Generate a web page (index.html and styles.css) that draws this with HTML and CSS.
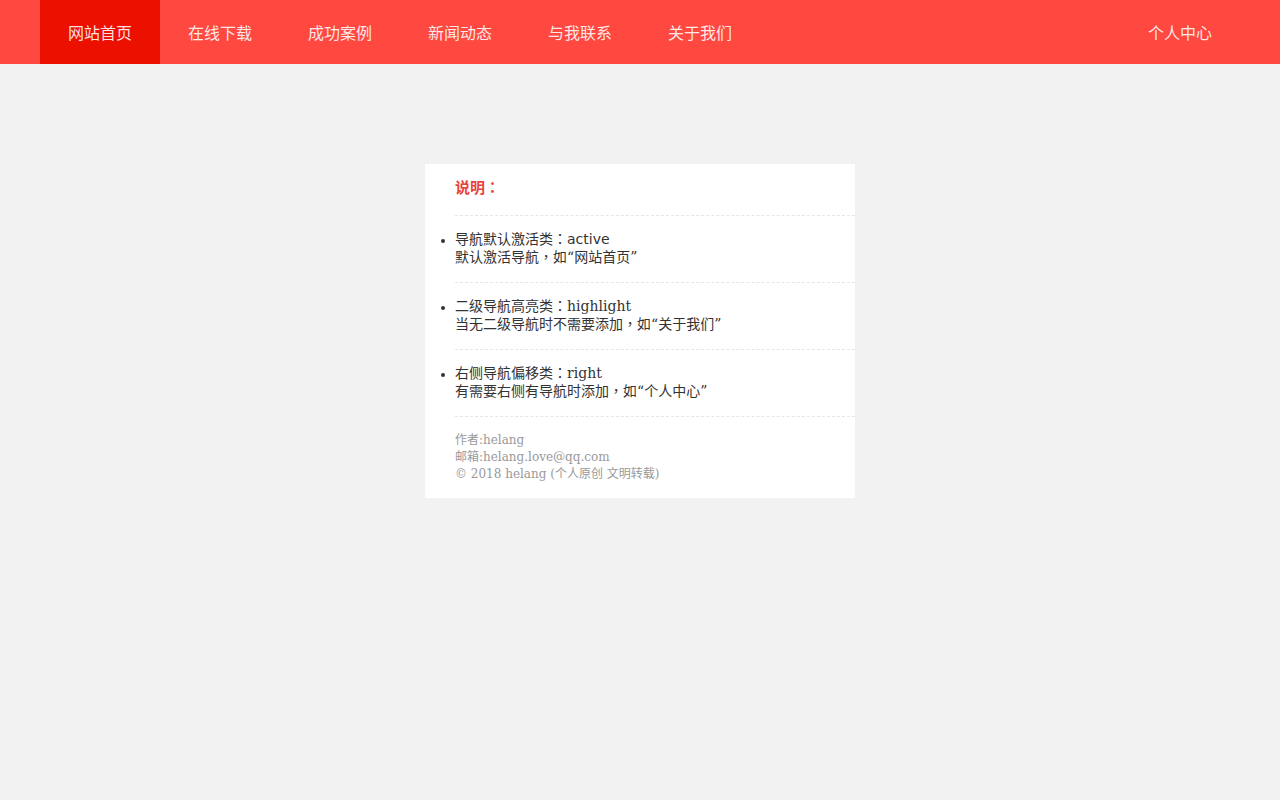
FILE: index.html
```html
<!DOCTYPE html>
<html lang="zh-CN">
<head>
<meta charset="utf-8">
<title>导航</title>
<link rel="stylesheet" href="styles.css">
</head>
<body>
<nav class="nav">
  <ul class="nav-list">
    <li class="nav-item active"><a href="#">网站首页</a></li>
    <li class="nav-item"><a href="#">在线下载</a></li>
    <li class="nav-item"><a href="#">成功案例</a></li>
    <li class="nav-item"><a href="#">新闻动态</a></li>
    <li class="nav-item"><a href="#">与我联系</a></li>
    <li class="nav-item"><a href="#">关于我们</a></li>
    <li class="nav-item right"><a href="#">个人中心</a></li>
  </ul>
</nav>
<div class="card" lang="zh-TW">
  <h3 class="card-title">说明：</h3>
  <ul class="notes">
    <li><span>导航默认激活类：<span class="sans">active</span></span><br>默认激活导航，如“网站首页”</li>
    <li><span>二级导航高亮类：highlight</span><br>当无二级导航时不需要添加，如“关于我们”</li>
    <li><span>右侧导航偏移类：right</span><br>有需要右侧有导航时添加，如“个人中心”</li>
  </ul>
  <div class="footer">
    作者:helang<br>
    邮箱:helang.love@qq.com<br>
    © 2018 helang (个人原创 文明转载)
  </div>
</div>
</body>
</html>
```
FILE: styles.css
```css
* { box-sizing: border-box; }
html, body { margin: 0; padding: 0; }
body {
  background: #f2f2f2;
  font-family: "DejaVu Serif", "Noto Sans CJK TC", serif;
  color: #333;
}
.nav {
  background: #ff4940;
  height: 64px;
  padding: 0 40px;
}
.nav-list {
  list-style: none;
  margin: 0;
  padding: 0;
  display: flex;
  height: 64px;
}
.nav-item a {
  display: block;
  width: 120px;
  height: 64px;
  line-height: 64px;
  text-align: center;
  font-family: "Noto Sans CJK SC", sans-serif;
  font-size: 16px;
  color: rgba(255,255,255,0.88);
  text-decoration: none;
}
.nav-item.active a { background: #eb1000; }
.nav-item.right { margin-left: auto; }
.card {
  width: 430px;
  margin: 100px auto 0;
  background: #fff;
  padding: 0 0 15px 30px;
}
.card-title {
  margin: 0;
  height: 52px;
  line-height: 49px;
  font-size: 15px;
  font-weight: bold;
  color: #e8453c;
  border-bottom: 1px dashed #e6e6e6;
}
.notes {
  margin: 0;
  padding: 0;
  font-size: 14px;
  color: #333;
}
.notes li {
  padding: 14px 0 16px;
  line-height: 18px;
  border-bottom: 1px dashed #e6e6e6;
}
.notes li::marker { font-size: 12px; }
.sans { font-family: "DejaVu Sans", sans-serif; }
.footer {
  padding-top: 15px;
  font-size: 12px;
  line-height: 17px;
  color: #999;
}
```
